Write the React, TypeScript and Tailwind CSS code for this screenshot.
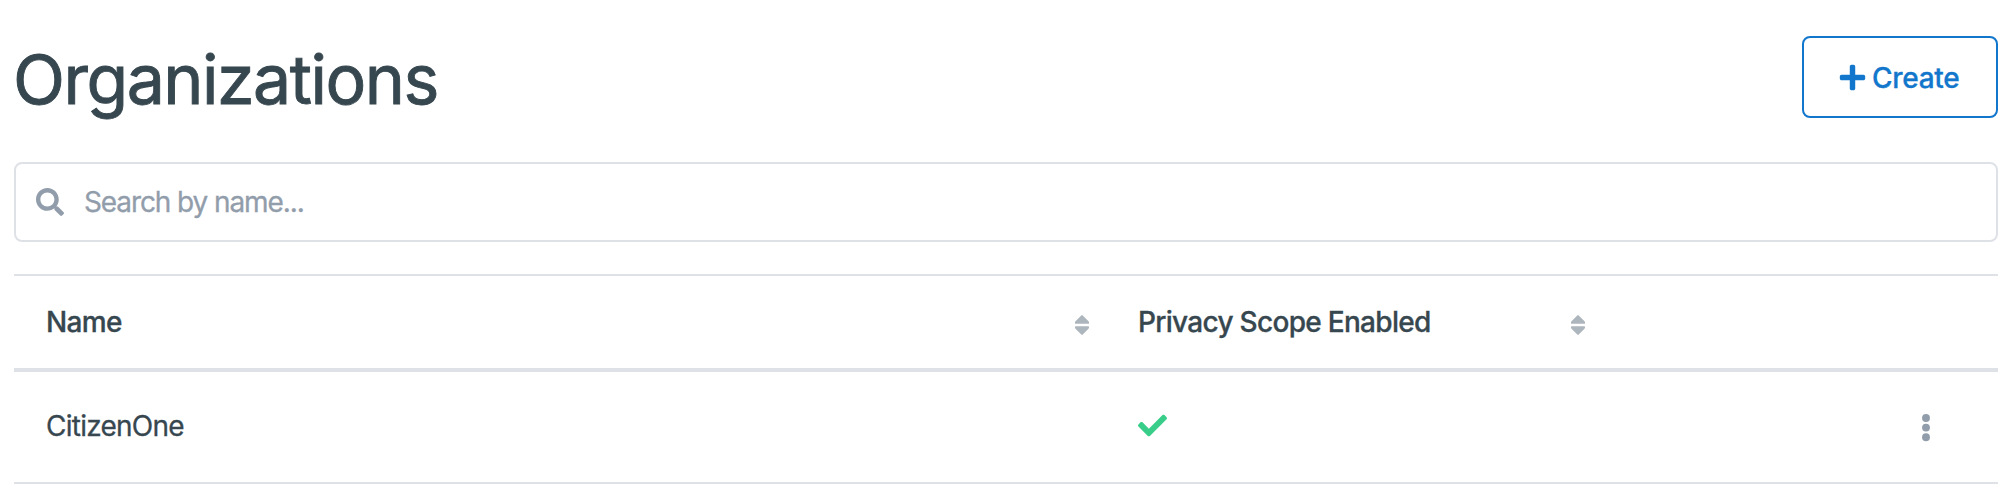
import { FaCheck, FaPlus, FaSearch } from "react-icons/fa";

const organizations = [{ name: "CitizenOne", privacyScope: true }];

function SortIcon() {
  return (
    <svg viewBox="0 0 14 20" className="mt-[5px] h-5 w-3.5 shrink-0 fill-[#adb5bd]">
      <path d="M6.3.4Q7-.3 7.7.4L13.5 6.2Q14 6.8 14 7.4V8.2Q14 8.8 13.3 8.8H.7Q0 8.8 0 8.2V7.4Q0 6.8.5 6.2Z" />
      <path d="M6.3 19.6Q7 20.3 7.7 19.6L13.5 13.8Q14 13.2 14 12.6V11.8Q14 11.2 13.3 11.2H.7Q0 11.2 0 11.8V12.6Q0 13.2.5 13.8Z" />
    </svg>
  );
}

function MoreIcon() {
  return (
    <svg viewBox="0 0 8 28" className="mt-0.5 h-7 w-2 fill-[#929dab]">
      <circle cx="4" cy="4" r="3.95" />
      <circle cx="4" cy="13.6" r="3.95" />
      <circle cx="4" cy="23.2" r="3.95" />
    </svg>
  );
}

export default function App() {
  return (
    <main className="h-[500px] bg-white pt-9 pr-3 pl-3.5 font-['Inter',sans-serif] text-[28px] leading-[42px] text-[#37474f] [-webkit-text-stroke:0.3px]">
      <header className="flex h-[82px] items-center justify-between">
        <h1 className="-ml-px pt-[3px] text-[68px] leading-[82px] tracking-[-1.5px] [-webkit-text-stroke:0.9px]">
          Organizations
        </h1>
        <button className="flex h-[82px] w-[196px] items-center rounded-lg border-2 border-[#1277cc] pl-[34px] font-medium text-[#1277cc]">
          <FaPlus className="size-[29px]" />
          <span className="ml-[5px] pt-0.5 tracking-[-0.3px]">Create</span>
        </button>
      </header>

      <label className="mt-11 flex h-20 items-center rounded-lg border-2 border-[#dee1e6] pl-5">
        <FaSearch className="size-7 text-[#929dab]" />
        <input
          type="text"
          placeholder="Search by name..."
          className="ml-5 h-[42px] flex-1 tracking-[-1.1px] outline-none placeholder:text-[#929dab]"
        />
      </label>

      <section className="mt-8 border-t-2 border-[#dee1e6]">
        <div className="grid h-24 grid-cols-[1092px_496px_1fr] items-center border-b-4 border-[#dee1e6] font-medium">
          <div className="flex items-center justify-between pr-[17px] pl-8">
            <span className="tracking-[-0.65px]">Name</span>
            <SortIcon />
          </div>
          <div className="flex items-center justify-between pr-[17px] pl-8">
            <span className="tracking-[-0.7px]">Privacy Scope Enabled</span>
            <SortIcon />
          </div>
        </div>
        {organizations.map((org) => (
          <div
            key={org.name}
            className="grid h-28 grid-cols-[1092px_496px_1fr] items-center border-b-2 border-[#dee1e6]"
          >
            <span className="pb-0.5 pl-8 tracking-[-0.75px]">{org.name}</span>
            <span className="pb-1 pl-8">
              {org.privacyScope && <FaCheck className="size-[29px] text-[#38ce8a]" />}
            </span>
            <button aria-label="Actions" className="flex justify-end pr-[68px]">
              <MoreIcon />
            </button>
          </div>
        ))}
      </section>
    </main>
  );
}
